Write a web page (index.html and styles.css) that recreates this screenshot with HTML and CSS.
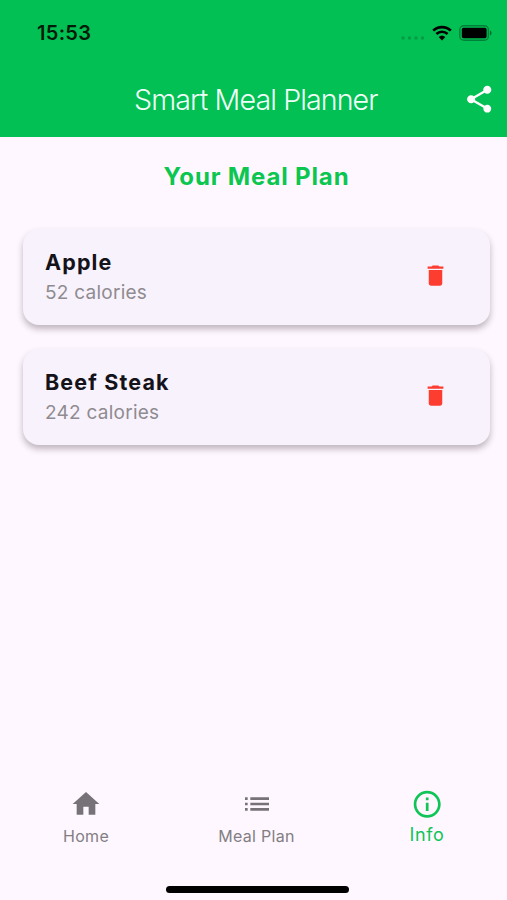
FILE: index.html
```html
<!DOCTYPE html>
<html lang="en">
<head>
<meta charset="utf-8">
<title>Smart Meal Planner</title>
<link rel="stylesheet" href="styles.css">
</head>
<body>
<div class="app">
  <header class="header">
    <div class="status">
      <span class="time">15:53</span>
      <div class="status-icons">
        <svg class="dots" width="24" height="4" viewBox="0 0 24 4"><circle cx="2" cy="2" r="1.7"/><circle cx="8.5" cy="2" r="1.7"/><circle cx="15" cy="2" r="1.7"/><circle cx="21.5" cy="2" r="1.7"/></svg>
        <svg class="wifi" width="20" height="16" viewBox="0 0 20 16"><path d="M1.2 5.6a12.7 12.7 0 0 1 17.6 0M4.4 9a8.1 8.1 0 0 1 11.2 0" fill="none" stroke="#000" stroke-width="2.7"/><path d="M10 15.4 6.7 12a4.8 4.8 0 0 1 6.6 0z"/></svg>
        <svg class="battery" width="34" height="16" viewBox="0 0 34 16"><rect x=".8" y=".8" width="28.6" height="14.4" rx="4" fill="none" stroke="#00803a" stroke-width="1.4"/><rect x="2.8" y="2.8" width="24.8" height="10.4" rx="1.6"/><path d="M31 5.5c2 .7 2 4.3 0 5z" fill="#00692b"/></svg>
      </div>
    </div>
    <div class="bar">
      <h1 class="title">Smart Meal Planner</h1>
      <svg class="share" width="32.4" height="32.4" viewBox="0 0 24 24"><path d="M18 16.08c-.76 0-1.44.3-1.96.77L8.91 12.7c.05-.23.09-.46.09-.7s-.04-.47-.09-.7l7.05-4.11c.54.5 1.25.81 2.04.81 1.66 0 3-1.34 3-3s-1.34-3-3-3-3 1.34-3 3c0 .24.04.47.09.7L8.04 9.81C7.5 9.31 6.79 9 6 9c-1.66 0-3 1.34-3 3s1.34 3 3 3c.79 0 1.5-.31 2.04-.81l7.12 4.16c-.05.21-.08.43-.08.65 0 1.61 1.31 2.92 2.92 2.92s2.92-1.31 2.92-2.92-1.31-2.92-2.92-2.92z"/></svg>
    </div>
  </header>
  <main class="content">
    <h2 class="heading">Your Meal Plan</h2>
    <div class="cards">
      <article class="card">
        <div>
          <h3 class="name">Apple</h3>
          <p class="calories">52 calories</p>
        </div>
        <svg class="trash" width="27" height="27" viewBox="0 0 24 24"><path d="M6 19c0 1.1.9 2 2 2h8c1.1 0 2-.9 2-2V7H6v12z"/><path d="M19 4h-3.5l-1-1h-5l-1 1H5v2h14V4z"/></svg>
      </article>
      <article class="card">
        <div>
          <h3 class="name">Beef Steak</h3>
          <p class="calories">242 calories</p>
        </div>
        <svg class="trash" width="27" height="27" viewBox="0 0 24 24"><path d="M6 19c0 1.1.9 2 2 2h8c1.1 0 2-.9 2-2V7H6v12z"/><path d="M19 4h-3.5l-1-1h-5l-1 1H5v2h14V4z"/></svg>
      </article>
    </div>
  </main>
  <nav class="tabs">
    <a class="tab">
      <svg width="32" height="32" viewBox="0 0 24 24"><path d="M10 20v-6h4v6h5v-8h3L12 3 2 12h3v8z"/></svg>
      <span>Home</span>
    </a>
    <a class="tab">
      <svg width="32" height="32" viewBox="0 0 24 24"><path d="M3 13h2v-2H3v2zm0 4h2v-2H3v2zm0-8h2V7H3v2zm4 4h14v-2H7v2zm0 4h14v-2H7v2zM7 7v2h14V7H7z"/></svg>
      <span>Meal Plan</span>
    </a>
    <a class="tab active">
      <svg width="32.4" height="32.4" viewBox="0 0 24 24"><path d="M11 7h2v2h-2zm0 4h2v6h-2zm1-9C6.48 2 2 6.48 2 12s4.48 10 10 10 10-4.48 10-10S17.52 2 12 2zm0 18c-4.41 0-8-3.59-8-8s3.59-8 8-8 8 3.59 8 8-3.59 8-8 8z"/></svg>
      <span>Info</span>
    </a>
  </nav>
  <div class="home-indicator"></div>
</div>
</body>
</html>
```
FILE: styles.css
```css
* {
  box-sizing: border-box;
}

body {
  margin: 0;
  font-family: Inter, "Liberation Sans", sans-serif;
  background: #fef7ff;
}

h1, h2, h3, p {
  margin: 0;
}

svg {
  display: block;
  flex: none;
}

.app {
  width: 507px;
  height: 900px;
  display: flex;
  flex-direction: column;
  overflow: hidden;
}

.header {
  height: 137px;
  flex: none;
  background: #02c053;
}

.status {
  height: 63px;
  padding: 2px 14px 0 37px;
  display: flex;
  align-items: center;
  justify-content: space-between;
}

.time {
  font-size: 20px;
  font-weight: 600;
  letter-spacing: .3px;
  color: #001c08;
}

.status-icons {
  display: flex;
  align-items: center;
}

.dots {
  margin: 10px 7px 0 0;
  fill: #079c45;
}

.wifi {
  margin-right: 7px;
}

.bar {
  height: 72px;
  padding: 0 12px 0 134px;
  display: flex;
  align-items: center;
  justify-content: space-between;
}

.title {
  font-size: 28.6px;
  font-weight: 340;
  letter-spacing: -0.9px;
  white-space: nowrap;
  color: #f0fff8;
}

.share {
  fill: #fff;
}

.content {
  flex: 1;
  padding: 25px 17px 0 23px;
}

.heading {
  font-size: 24px;
  line-height: 30px;
  font-weight: 650;
  letter-spacing: .85px;
  text-align: center;
  color: #0bc64f;
}

.cards {
  margin-top: 37px;
  display: grid;
  gap: 24px;
}

.card {
  height: 96px;
  padding: 0 41px 0 22px;
  display: flex;
  align-items: center;
  justify-content: space-between;
  border-radius: 16px;
  background: #f8f2fc;
  box-shadow: 0 4px 6px rgba(60, 45, 60, .32);
}

.name {
  font-size: 21.5px;
  line-height: 29px;
  font-weight: 650;
  letter-spacing: 1.15px;
  color: #15131a;
}

.calories {
  padding-top: 1px;
  margin-bottom: -1px;
  font-size: 19px;
  line-height: 30px;
  letter-spacing: .25px;
  color: #8f8b90;
}

.trash {
  margin-bottom: 3px;
  fill: #fd3d30;
}

.tabs {
  height: 102px;
  flex: none;
  padding: 0 0 0 1px;
  display: grid;
  grid-template-columns: 170px 171px 170px;
}

.tab {
  display: flex;
  flex-direction: column;
  align-items: center;
  padding-top: 8px;
  font-size: 16px;
  line-height: 20px;
  letter-spacing: .3px;
  gap: 6px;
  color: #827e82;
  fill: #777278;
}

.tab.active {
  font-size: 18px;
  gap: 5px;
  letter-spacing: .6px;
  color: #10c458;
  fill: #10c458;
}

.home-indicator {
  flex: none;
  align-self: center;
  width: 183px;
  height: 7px;
  margin: 4px 0 7px 7px;
  border-radius: 4px;
  background: #000;
}
```
